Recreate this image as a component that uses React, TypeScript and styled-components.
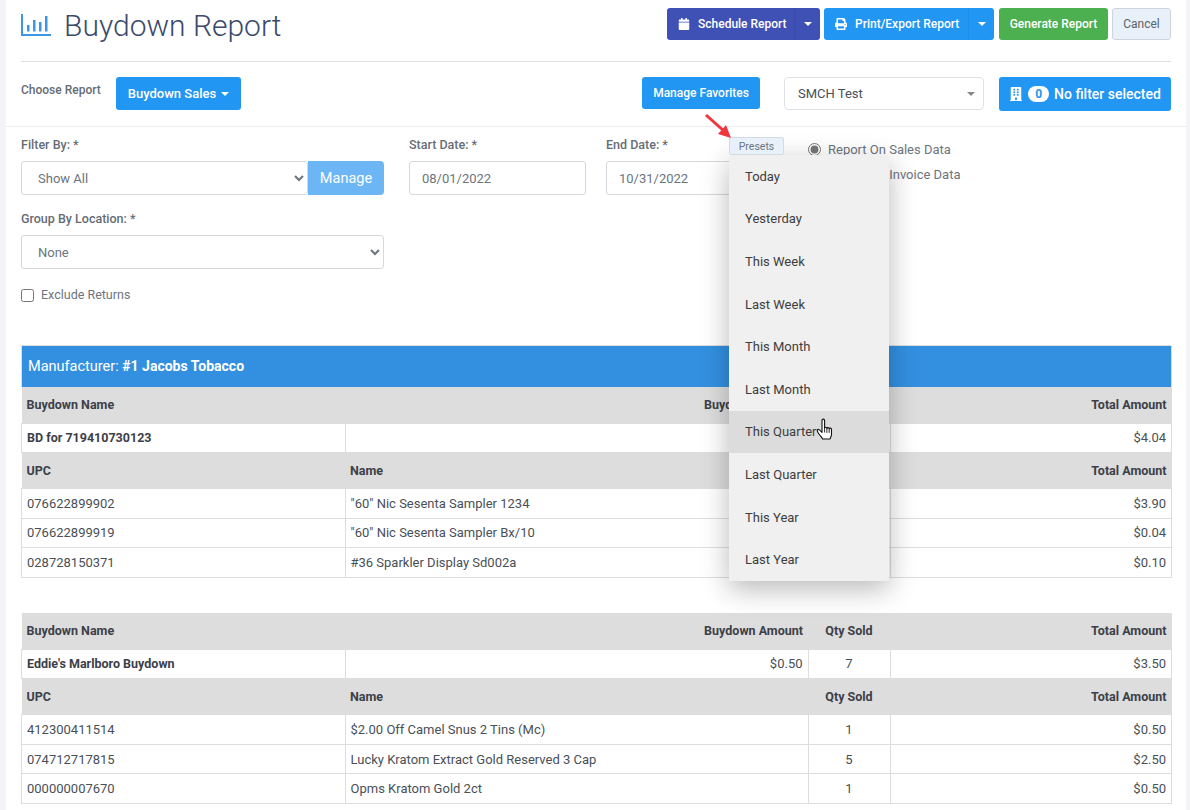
import React from "react";
import styled, { createGlobalStyle } from "styled-components";
import { FaBuilding, FaCalendar, FaPrint } from "react-icons/fa";

const GlobalStyle = createGlobalStyle`
  html, body {
    margin: 0;
    height: 100%;
    overflow: hidden;
    background: #f3f3f9;
    font-family: Roboto, "Liberation Sans", sans-serif;
  }
  * { box-sizing: border-box; }
`;

const Panel = styled.div`
  width: 1180px;
  height: 810px;
  margin-left: 6px;
  background: #fff;
  color: #6c757d;
  font-size: 13px;
  overflow: hidden;
`;

const TitleRow = styled.div`
  display: flex;
  align-items: flex-start;
  justify-content: space-between;
  height: 62px;
  margin: 0 15px;
  padding-top: 8px;
  border-bottom: 1px solid #dfdfdf;
`;

const Title = styled.h1`
  display: flex;
  align-items: center;
  gap: 13px;
  margin: 0;
  height: 34px;
  font-size: 30px;
  font-weight: 300;
  color: #3b4a6b;
`;

const ButtonRow = styled.div`
  display: flex;
  gap: 4px;
`;

const Button = styled.button<{ $bg: string; $width: number; $height?: number }>`
  display: inline-flex;
  align-items: center;
  justify-content: center;
  gap: 5px;
  width: ${(p) => p.$width}px;
  height: ${(p) => p.$height ?? 32}px;
  padding: 0;
  border: 0;
  border-radius: 3px;
  background: ${(p) => p.$bg};
  color: #fff;
  font-family: inherit;
  font-size: 12px;
  font-weight: 500;
`;

const CancelButton = styled(Button)`
  border: 1px solid #ced4da;
  color: #5a6268;
  font-weight: 400;
`;

const SplitButton = styled.div<{ $bg: string; $width: number }>`
  display: flex;
  width: ${(p) => p.$width}px;
  height: 32px;
  border-radius: 3px;
  background: ${(p) => p.$bg};
  color: #fff;
  font-size: 12px;
  font-weight: 500;
`;

const SplitLabel = styled.div`
  flex: 1;
  display: flex;
  align-items: center;
  gap: 8px;
  padding-left: 11px;
  svg { font-size: 12px; }
`;

const SplitCaret = styled.div`
  width: 26px;
  display: flex;
  align-items: center;
  justify-content: center;
  border-left: 1px solid rgba(0, 0, 0, 0.05);
`;

const Caret = styled.span`
  display: inline-block;
  width: 0;
  height: 0;
  border-left: 4px solid transparent;
  border-right: 4px solid transparent;
  border-top: 4px solid currentColor;
`;

const ChooseRow = styled.div`
  display: flex;
  align-items: flex-start;
  height: 65px;
  padding: 15px 15px 0;
  border-bottom: 1px solid #eee;
`;

const ChooseLabel = styled.div`
  width: 95px;
  padding-top: 5px;
  font-size: 12px;
  font-weight: 500;
  line-height: 16px;
  color: #666d75;
`;

const RightGroup = styled.div`
  display: flex;
  align-items: flex-start;
  margin-left: auto;
`;

const FakeSelect = styled.div`
  display: flex;
  align-items: center;
  justify-content: space-between;
  width: 200px;
  height: 33px;
  margin: 0 15px 0 24px;
  padding: 0 8px 0 13px;
  border: 1px solid #dfe3e7;
  border-radius: 4px;
  color: #495057;
  font-size: 13px;
  ${Caret} { color: #888; }
`;

const Badge = styled.span`
  display: inline-flex;
  align-items: center;
  justify-content: center;
  width: 21px;
  height: 16px;
  border-radius: 9px;
  background: #fff;
  color: #2196f3;
  font-size: 12px;
  font-weight: 700;
`;

const FilterGrid = styled.div`
  display: flex;
  height: 218px;
  padding: 10px 15px 0;
`;

const Column = styled.div<{ $width: number; $gap: number }>`
  position: relative;
  width: ${(p) => p.$width}px;
  margin-right: ${(p) => p.$gap}px;
`;

const Label = styled.div`
  height: 16px;
  margin-bottom: 8px;
  font-size: 12.5px;
  font-weight: 500;
  line-height: 16px;
  color: #666d75;
`;

const Select = styled.select`
  flex: 1;
  width: 100%;
  height: 34px;
  padding: 0 8px 0 12px;
  border: 1px solid #d5d8dc;
  border-radius: 3px;
  background: #fff;
  color: #6c757d;
  font-family: inherit;
  font-size: 13px;
`;

const InputGroup = styled.div`
  display: flex;
  margin-bottom: 16px;
`;

const ManageButton = styled.button`
  width: 76px;
  height: 34px;
  border: 0;
  border-radius: 0 4px 4px 0;
  background: #6cb6f6;
  color: #fff;
  font-family: inherit;
  font-size: 14.5px;
`;

const DateInput = styled.input`
  width: 100%;
  height: 34px;
  padding: 0 12px;
  border: 1px solid #d5d8dc;
  border-radius: 3px;
  color: #6c757d;
  font-family: inherit;
  font-size: 13px;
`;

const CheckLine = styled.label`
  display: flex;
  align-items: center;
  gap: 7px;
  margin-top: 17px;
  height: 16px;
  font-size: 12.5px;
  input { width: 13px; height: 13px; margin: 3px 0 0; }
`;

const RadioLine = styled.label`
  display: flex;
  align-items: center;
  gap: 7px;
  height: 25px;
  font-size: 13px;
  input { width: 13px; height: 13px; margin: 0; accent-color: #777; }
`;

const PresetsButton = styled.button`
  position: absolute;
  left: 123px;
  top: 0;
  width: 55px;
  height: 18px;
  padding: 0;
  border: 1px solid #d3dbe3;
  border-radius: 2px;
  background: #e8f1fa;
  color: #6c757d;
  font-family: inherit;
  font-size: 10.5px;
  z-index: 3;
`;

const PresetsMenu = styled.div`
  position: absolute;
  left: 123px;
  top: 18px;
  width: 160px;
  background: #f0f0f0;
  box-shadow: 0 8px 26px rgba(0, 0, 0, 0.28);
  z-index: 2;
`;

const PresetItem = styled.div<{ $active?: boolean }>`
  position: relative;
  display: flex;
  align-items: center;
  height: 42.6px;
  padding-left: 16px;
  background: ${(p) => (p.$active ? "#dcdcdc" : "transparent")};
  color: #3d3d3d;
  font-size: 13px;
`;

const ArrowMark = styled.svg`
  position: absolute;
  left: 98px;
  top: -24px;
  z-index: 4;
`;

const HandCursor = styled.svg`
  position: absolute;
  left: 87px;
  top: 7px;
`;

const TableArea = styled.div`
  padding: 0 15px;
`;

const Table = styled.table<{ $gap?: boolean }>`
  width: 1150px;
  table-layout: fixed;
  border-collapse: collapse;
  margin-bottom: ${(p) => (p.$gap ? 35 : 0)}px;
  color: #495057;
  font-size: 13px;
`;

const BlueCell = styled.td`
  height: 41px;
  padding: 0 6px;
  background: #3390e0;
  border: 1px solid #ddd;
  border-bottom: 0;
  color: #fff;
  font-size: 14.5px;
  b { font-size: 14px; font-weight: 700; }
`;

const HeadCell = styled.th<{ $align?: string }>`
  height: 36.5px;
  padding: 0 5px;
  background: #ddd;
  color: #3c4048;
  font-size: 12.5px;
  font-weight: 700;
  text-align: ${(p) => p.$align ?? "left"};
`;

const Cell = styled.td<{ $align?: string; $bold?: boolean }>`
  height: 29.4px;
  padding: 0 5px;
  border: 1px solid #ddd;
  font-weight: ${(p) => (p.$bold ? 700 : 400)};
  color: ${(p) => (p.$bold ? "#3c4048" : "#495057")};
  font-size: ${(p) => (p.$bold ? "12.5px" : "13px")};
  text-align: ${(p) => p.$align ?? "left"};
`;

const presets = [
  "Today",
  "Yesterday",
  "This Week",
  "Last Week",
  "This Month",
  "Last Month",
  "This Quarter",
  "Last Quarter",
  "This Year",
  "Last Year",
];

const ReportColumns = () => (
  <colgroup>
    <col width={323.5} />
    <col width={463} />
    <col width={82} />
    <col width={281.5} />
  </colgroup>
);

interface IBuydown {
  name: string;
  amount: string;
  qty: string;
  total: string;
  items: string[][];
}

const buydowns: IBuydown[] = [
  {
    name: "BD for 719410730123",
    amount: "$1.01",
    qty: "4",
    total: "$4.04",
    items: [
      ["076622899902", '"60" Nic Sesenta Sampler 1234', "3", "$3.90"],
      ["076622899919", '"60" Nic Sesenta Sampler Bx/10', "1", "$0.04"],
      ["028728150371", "#36 Sparkler Display Sd002a", "1", "$0.10"],
    ],
  },
  {
    name: "Eddie's Marlboro Buydown",
    amount: "$0.50",
    qty: "7",
    total: "$3.50",
    items: [
      ["412300411514", "$2.00 Off Camel Snus 2 Tins (Mc)", "1", "$0.50"],
      ["074712717815", "Lucky Kratom Extract Gold Reserved 3 Cap", "5", "$2.50"],
      ["000000007670", "Opms Kratom Gold 2ct", "1", "$0.50"],
    ],
  },
];

const BuydownRows = ({ data }: { data: IBuydown }) => (
  <>
    <tr>
      <HeadCell>Buydown Name</HeadCell>
      <HeadCell $align="right">Buydown Amount</HeadCell>
      <HeadCell $align="center">Qty Sold</HeadCell>
      <HeadCell $align="right">Total Amount</HeadCell>
    </tr>
    <tr>
      <Cell $bold>{data.name}</Cell>
      <Cell $align="right">{data.amount}</Cell>
      <Cell $align="center">{data.qty}</Cell>
      <Cell $align="right">{data.total}</Cell>
    </tr>
    <tr>
      <HeadCell>UPC</HeadCell>
      <HeadCell>Name</HeadCell>
      <HeadCell $align="center">Qty Sold</HeadCell>
      <HeadCell $align="right">Total Amount</HeadCell>
    </tr>
    {data.items.map((item) => (
      <tr key={item[0]}>
        <Cell>{item[0]}</Cell>
        <Cell>{item[1]}</Cell>
        <Cell $align="center">{item[2]}</Cell>
        <Cell $align="right">{item[3]}</Cell>
      </tr>
    ))}
  </>
);

export default function App() {
  return (
    <Panel>
      <GlobalStyle />
      <TitleRow>
        <Title>
          <svg width="30" height="22" viewBox="0 0 30 22" fill="#3a97e8">
            <rect x="0" y="0" width="2" height="22" />
            <rect x="0" y="20" width="30" height="2" />
            <rect x="6" y="11" width="2.5" height="6.5" />
            <rect x="12" y="6" width="2.5" height="11.5" />
            <rect x="18" y="8" width="2.5" height="9.5" />
            <rect x="24" y="2" width="2.5" height="15.5" />
          </svg>
          Buydown Report
        </Title>
        <ButtonRow>
          <SplitButton $bg="#3f51b5" $width={153}>
            <SplitLabel>
              <FaCalendar />
              Schedule Report
            </SplitLabel>
            <SplitCaret>
              <Caret />
            </SplitCaret>
          </SplitButton>
          <SplitButton $bg="#2196f3" $width={170}>
            <SplitLabel>
              <FaPrint />
              Print/Export Report
            </SplitLabel>
            <SplitCaret>
              <Caret />
            </SplitCaret>
          </SplitButton>
          <Button $bg="#4caf50" $width={109} style={{ marginLeft: 1 }}>
            Generate Report
          </Button>
          <CancelButton $bg="#e8f1fa" $width={59}>
            Cancel
          </CancelButton>
        </ButtonRow>
      </TitleRow>

      <ChooseRow>
        <ChooseLabel>Choose Report</ChooseLabel>
        <Button $bg="#2196f3" $width={125} $height={33} style={{ fontSize: 13 }}>
          Buydown Sales <Caret />
        </Button>
        <RightGroup>
          <Button $bg="#2196f3" $width={118}>
            Manage Favorites
          </Button>
          <FakeSelect>
            SMCH Test
            <Caret />
          </FakeSelect>
          <Button $bg="#2196f3" $width={172} $height={34} style={{ fontSize: 14 }}>
            <FaBuilding />
            <Badge>0</Badge>
            No filter selected
          </Button>
        </RightGroup>
      </ChooseRow>

      <FilterGrid>
        <Column $width={363} $gap={25}>
          <Label>Filter By: *</Label>
          <InputGroup>
            <Select defaultValue="all">
              <option value="all">Show All</option>
            </Select>
            <ManageButton>Manage</ManageButton>
          </InputGroup>
          <Label>Group By Location: *</Label>
          <Select defaultValue="none">
            <option value="none">None</option>
          </Select>
          <CheckLine>
            <input type="checkbox" />
            Exclude Returns
          </CheckLine>
        </Column>
        <Column $width={177} $gap={20}>
          <Label>Start Date: *</Label>
          <DateInput defaultValue="08/01/2022" />
        </Column>
        <Column $width={177} $gap={25}>
          <Label>End Date: *</Label>
          <DateInput defaultValue="10/31/2022" />
          <ArrowMark width="30" height="28" viewBox="0 0 30 28">
            <path d="M2 2 L20 18" stroke="#f0353f" strokeWidth="3" />
            <path d="M27 25 L14 21 L22 12 Z" fill="#f0353f" />
          </ArrowMark>
          <PresetsButton>Presets</PresetsButton>
          <PresetsMenu>
            {presets.map((p) => (
              <PresetItem key={p} $active={p === "This Quarter"}>
                {p}
                {p === "This Quarter" && (
                  <HandCursor width="18" height="24" viewBox="0 0 18 24">
                    <path
                      d="M6 2.5c0-1.8 2.6-1.8 2.6 0V10c0-1 2.3-1 2.3 0.4 0-1.1 2.2-1.1 2.3 0.4 0-1 2.2-1 2.3 0.6v5.2c0 2-1 3.2-1.6 4.4H6.6C5.8 19 3.8 17.6 2.4 15.3 1.4 13.6 1 13 1.2 12.2c0.4-1.1 1.8-1 2.8 0.1L6 14.4Z"
                      fill="#fff"
                      stroke="#111"
                      strokeWidth="1.1"
                      strokeLinejoin="round"
                    />
                    <path d="M8.6 10v4.5M10.9 10.4v4.5M13.2 10.8v4" stroke="#111" strokeWidth="0.9" />
                  </HandCursor>
                )}
              </PresetItem>
            ))}
          </PresetsMenu>
        </Column>
        <Column $width={170} $gap={0}>
          <RadioLine>
            <input type="radio" name="source" defaultChecked />
            Report On Sales Data
          </RadioLine>
          <RadioLine>
            <input type="radio" name="source" />
            Report On Invoice Data
          </RadioLine>
        </Column>
      </FilterGrid>

      <TableArea>
        <Table $gap>
          <ReportColumns />
          <tbody>
            <tr>
              <BlueCell colSpan={4}>
                Manufacturer: <b>#1 Jacobs Tobacco</b>
              </BlueCell>
            </tr>
            <BuydownRows data={buydowns[0]} />
          </tbody>
        </Table>
        <Table>
          <ReportColumns />
          <tbody>
            <BuydownRows data={buydowns[1]} />
          </tbody>
        </Table>
      </TableArea>
    </Panel>
  );
}
